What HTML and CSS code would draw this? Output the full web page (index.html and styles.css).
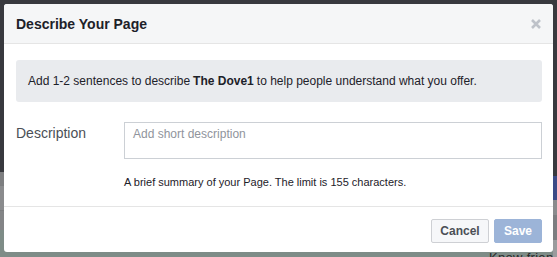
FILE: index.html
```html
<!DOCTYPE html>
<html>
<head>
<meta charset="utf-8">
<link rel="stylesheet" href="styles.css">
</head>
<body>
<div class="backdrop-text">Know friends</div>
<div class="dialog">
  <div class="dialog-header">
    <h1 class="dialog-title">Describe Your Page</h1>
    <span class="close-btn" aria-label="Close">
      <svg width="10" height="10" viewBox="0 0 10 10"><path d="M1 1 L9 9 M9 1 L1 9" stroke="#bec2c9" stroke-width="2.6" stroke-linecap="butt"/></svg>
    </span>
  </div>
  <div class="dialog-body">
    <div class="info-box">Add 1-2 sentences to describe <b>The Dove1</b> to help people understand what you offer.</div>
    <div class="field-row">
      <label class="field-label">Description</label>
      <div class="field-main">
        <div class="textarea">Add short description</div>
        <div class="helper">A brief summary of your Page. The limit is 155 characters.</div>
      </div>
    </div>
  </div>
  <div class="dialog-footer">
    <button class="btn btn-cancel">Cancel</button>
    <button class="btn btn-save">Save</button>
  </div>
</div>
</body>
</html>
```
FILE: styles.css
```css
html, body {
  margin: 0;
  height: 100%;
}
body {
  width: 557px;
  height: 257px;
  overflow: hidden;
  box-sizing: border-box;
  padding: 4px 0 0 4px;
  font-family: "Liberation Sans", Arial, sans-serif;
  position: relative;
  background:
    linear-gradient(to bottom,
      #38393e 0, #38393e 172px,
      #7d7e80 172px, #7d7e80 185px,
      #6e6f72 185px, #8a8b8d 186px, #8a8b8d 210px,
      #747577 210px, #838486 211px, #838486 230px,
      #7e8c87 230px, #7e8c87 257px);
}
body::after {
  content: "";
  position: absolute;
  left: 553px;
  top: 0;
  width: 4px;
  height: 257px;
  background: linear-gradient(to bottom,
    #38393e 0, #38393e 176px,
    #3b4a86 176px, #3b4a86 200px,
    #8a8b8d 200px, #8a8b8d 215px,
    #7c7d80 215px, #7c7d80 240px,
    #9a9b9d 240px);
}
.backdrop-text {
  position: absolute;
  left: 489px;
  top: 250px;
  font-size: 13px;
  color: #2a2a2a;
  white-space: nowrap;
  letter-spacing: 0.3px;
}
.dialog {
  position: relative;
  z-index: 1;
  width: 549px;
  height: 248px;
  background: #fff;
  border-radius: 3px;
  display: flex;
  flex-direction: column;
  overflow: hidden;
}
.dialog-header {
  height: 39px;
  background: #f5f6f7;
  border-bottom: 1px solid #e5e5e5;
  display: flex;
  align-items: center;
  justify-content: space-between;
  padding: 0 12px;
}
.dialog-title {
  margin: 0;
  font-size: 14px;
  font-weight: bold;
  color: #1d2129;
  line-height: 19px;
  padding-top: 1px;
}
.close-btn {
  display: flex;
  padding-top: 1px;
}
.dialog-body {
  padding: 16px 11px 0 12px;
  flex: 1;
}
.info-box {
  background: #e9ebee;
  border-radius: 3px;
  height: 42px;
  box-sizing: border-box;
  padding: 0 12px;
  display: flex;
  align-items: center;
  font-size: 12px;
  color: #1d2129;
}
.info-box b {
  margin: 0 3px;
}
.field-row {
  display: flex;
  margin-top: 20px;
}
.field-label {
  width: 108px;
  font-size: 14px;
  color: #4b4f56;
  padding-top: 3px;
}
.field-main {
  flex: 1;
}
.textarea {
  height: 37px;
  box-sizing: border-box;
  border: 1px solid #ccd0d5;
  padding: 3px 8px;
  font-size: 12px;
  color: #90949c;
  line-height: 16px;
}
.helper {
  margin-top: 16px;
  font-size: 11px;
  color: #1d2129;
  line-height: 14px;
}
.dialog-footer {
  border-top: 1px solid #e5e5e5;
  height: 46px;
  box-sizing: border-box;
  display: flex;
  justify-content: flex-end;
  align-items: flex-start;
  gap: 5px;
  padding: 12px 11px 0 0;
}
.btn {
  height: 24px;
  box-sizing: border-box;
  border-radius: 2px;
  font-family: "Liberation Sans", Arial, sans-serif;
  font-size: 12px;
  font-weight: bold;
  padding: 0 8px;
  line-height: 22px;
}
.btn-cancel {
  width: 58px;
  background: #f6f7f9;
  border: 1px solid #ced0d4;
  color: #4b4f56;
}
.btn-save {
  width: 48px;
  background: #9cb4d8;
  border: 1px solid #9cb4d8;
  color: #fff;
}
```
